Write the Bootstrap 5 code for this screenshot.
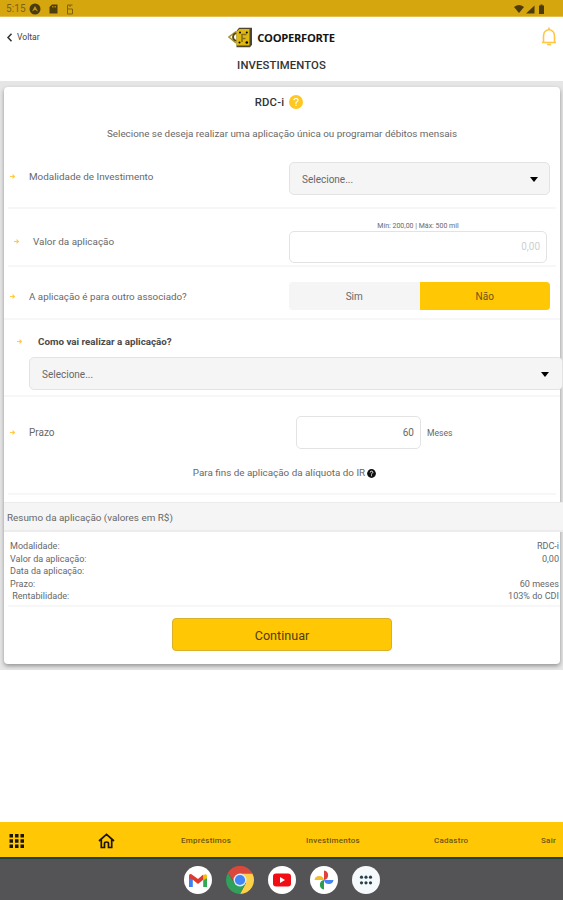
<!DOCTYPE html>
<html lang="pt-BR">
<head>
<meta charset="utf-8">
<meta name="viewport" content="width=device-width, initial-scale=1">
<title>Cooperforte - Investimentos</title>
<link href="https://cdn.jsdelivr.net/npm/bootstrap@5.3.0/dist/css/bootstrap.min.css" rel="stylesheet">
<style>
body{font-family:Roboto,"Liberation Sans",sans-serif;font-size:10px;line-height:12px;color:#686868;background:#fff;height:900px;overflow:hidden}
svg{display:block;flex:none}
.statusbar{height:17px;background:#d6a60f;color:#7a621a;padding:2px 17px 0 6px;border-bottom:1px solid #e3bd52}
.clock{font-size:10px;letter-spacing:.1px;margin-right:3px}
.apphead{height:64px;display:grid;grid-template-columns:1fr auto 1fr;padding:10px 6px 0 6px;align-items:start}
.back{font-size:8.6px;color:#444;padding-top:4px;gap:4px}
.brand{color:#151515;font:700 11.2px/20px "Open Sans",Roboto,sans-serif;letter-spacing:-.3px;gap:4px}
.pagetitle{grid-column:1/4;text-align:center;font-size:11.3px;line-height:14px;color:#333;font-weight:500;letter-spacing:.12px;padding-top:3px}
.backdrop{background:#e6e6e6;height:589px;padding:6px 3px 0 4px}
.sheet{background:#fff;height:577px;border-radius:4px;box-shadow:0 2px 4px rgba(0,0,0,.36);width:556px}
.intro{height:62px;padding-top:7px}
.rdc{font-size:11.3px;line-height:14px;color:#333;font-weight:500;gap:5px;padding-right:6px;letter-spacing:.2px}
.rdc span{padding-top:2px}
.rdc svg{margin-top:-1px}
.intro p{margin:18px 0 0;font-size:9.85px}
.line{border-bottom:2px solid #f7f7f7;margin:0 4px;padding-right:6px}
.line.wide{margin:0}
.lab{display:flex;align-items:center}
.lab svg{width:5px;height:5px;margin-top:-1px}
.row-a{height:60px;padding-top:13px}
.row-b{height:58px;padding-top:12px}
.row-c{height:53px;padding:15px 10px 0 0}
.row-d{height:77px;padding-top:16px}
.row-e{height:98px;padding-top:19px}
.field{border:1px solid #e3e3e3;border-radius:5px;background:#fff}
.picker{background:#f5f5f5;height:33px;padding:2px 11px 0 12px;display:flex;align-items:center;justify-content:space-between}
.row-a .lab,.row-e .lab{margin-left:2px;gap:14px}
.row-a .lab{margin-top:9px;font-size:9.9px}
.row-b .lab{margin:15px 0 0 6px;gap:14px;font-size:9.9px}
.row-c .lab{margin:9px 0 0 6px;gap:14px;font-size:9.8px}
.w-pick{width:261px}
.amount-box{margin-right:3px}
.amount{width:258px;height:32px;text-align:right;line-height:30px;padding-right:6px;color:#cfcfcf}
.hint{font-size:7px;line-height:9px;padding-top:1px}
.seg{width:261px;height:28px;border-radius:4px;overflow:hidden;line-height:30px;text-align:center;background:#f5f5f5}
.seg .on{background:#ffc704;color:#6b5614}
.lab.strong-lab{font-weight:700;color:#4a4a4a;gap:16px;margin-left:13px;font-size:9.8px}
.picker.full{width:534px;margin:9px 0 0 25px;position:relative;padding-right:13px}
.months{width:125px;height:33px;line-height:32px;text-align:right;padding-right:6px;margin-left:241px;flex:none}
.row-e .lab{width:45px;flex:none}
.monthslab{font-size:8.6px;margin-left:6px;padding-top:1px}
.note{font-size:9.85px;margin-top:18px;gap:2px;padding-left:5px;margin-right:-6px}
.sumhead{margin-top:7px;height:30px;width:559px;background:#f5f5f5;border-top:1px solid #ececec;border-bottom:2px solid #ececec;line-height:30px;padding-left:3px;font-size:9.9px}
.sumlist{height:75px;margin:0 0 0 4px;border-bottom:2px solid #f7f7f7;padding:8px 1px 0 2px;font-size:9.05px;line-height:12.6px}
.go.btn{width:220px;height:33px;background:#ffc704;border:1px solid #d9b02c;border-radius:4px;color:#4d3f10;font-size:12.6px;line-height:34px;margin-top:11px;padding:0}
.blank{height:152px}
.tabs{height:37px;background:#ffc704;border-bottom:2px solid #22443a;font-size:8px;letter-spacing:.25px;color:#6e5510;font-weight:500;display:grid;grid-template-columns:98px 83px 125px 128px 107px 1fr;align-items:center}
.tabs span{padding-top:3px}
.tabs svg{margin-top:2px}
.dock{height:41px;background:#545456;gap:14px}
</style>
<script src="https://cdn.jsdelivr.net/npm/bootstrap@5.3.0/dist/js/bootstrap.bundle.min.js"></script>
</head>
<body>
<svg class="d-none"><defs>
<symbol id="arrow" viewBox="0 0 5 5"><path d="M0 2.5H4.5M2.5.6 4.5 2.5 2.5 4.4" fill="none" stroke="#ffc94a" stroke-width="1.1"/></symbol>
</defs></svg>
<div class="statusbar d-flex align-items-center">
  <span class="clock">5:15</span>
  <svg width="12" height="12" viewBox="0 0 12 12"><circle cx="6" cy="6" r="5.5" fill="#4a3b10"/><path d="M3 8.500 6 3l3 5.500-3-1.800z" fill="#c2970f"/></svg>
  <svg class="ms-2" width="9" height="10" viewBox="0 0 9 10"><path d="M3 .5h5.500v9H.5V3z" fill="#4f3e0d"/><path d="M3.500 2v1.500M5 2v1.500M6.500 2v1.500" stroke="#d6a60f" stroke-width=".7"/></svg>
  <svg class="ms-2" width="8" height="11" viewBox="0 0 8 11"><path d="M6.500 1H1.500v4h5v5h-5V5M4 1v2" fill="none" stroke="#806310"/></svg>
  <svg class="ms-auto" width="32" height="11" viewBox="0 0 32 11"><path d="M0 3Q5 -1 10 3L5 9z" fill="#4d3c0b"/><path d="M12 9.500 20.500 1.500v8z" fill="#4d3c0b"/><path d="M25 1.500h1.500V.5h2v1H30v8.500h-5z" fill="#4d3c0b"/></svg>
</div>
<header class="apphead">
  <div class="back d-flex align-items-center"><svg width="7" height="9" viewBox="0 0 7 9"><path d="M5.500 .7 2 4.500 5.500 8.300" fill="none" stroke="#333" stroke-width="1.500"/></svg>Voltar</div>
  <div class="brand d-flex align-items-center">
    <svg width="25" height="21" viewBox="0 0 25 21"><path d="M8 4.500 1 10l7 6" fill="none" stroke="#a99438" stroke-width="1.500"/><path d="M8.500 6Q5 7 5 10t3.500 4" fill="none" stroke="#55490f" stroke-width="1.800"/><path d="M8.500 4 11 .8h13v17L22 20.300H8.500z" fill="#4b452f"/><path d="M8.500 4.500 11.500 2h10v16.500h-13z" fill="#e0b910"/><path d="M14 15V7.500h4.500M14 11.500h3.500" fill="none" stroke="#88701a" stroke-width="1.600"/><circle cx="12" cy="5.500" r="1"/><circle cx="18.800" cy="5.500" r="1"/><circle cx="18.800" cy="15.500" r="1.300"/><circle cx="11.500" cy="15.500" r="1"/></svg>
    <span>COOPERFORTE</span></div>
  <svg class="ms-auto" width="16" height="20" viewBox="0 0 16 20"><path d="M1 15.500h14M2.500 15.500V9Q2.500 3.500 8 2.500 13.500 3.500 13.500 9v6.500M8 .5v2M6 17.500h4" fill="none" stroke="#ffc545" stroke-width="1.600"/></svg>
  <div class="pagetitle">INVESTIMENTOS</div>
</header>
<main class="backdrop">
  <div class="sheet">
    <div class="intro text-center">
      <div class="rdc d-flex justify-content-center align-items-center"><span>RDC-i</span><svg width="14" height="14" viewBox="0 0 14 14"><circle cx="7" cy="7" r="7" fill="#ffc820"/><path d="M5 5.300Q5 3.500 7 3.500t2 1.800Q9 6.500 7 7.500V8.800M7 9.800v1.200" fill="none" stroke="#fff" stroke-width="1.200"/></svg></div>
      <p>Selecione se deseja realizar uma aplicação única ou programar débitos mensais</p>
    </div>
    <div class="line row-a d-flex justify-content-between align-items-start">
      <div class="lab"><svg><use href="#arrow"/></svg><span>Modalidade de Investimento</span></div>
      <div class="field picker w-pick"><span>Selecione...</span><svg width="8" height="5" viewBox="0 0 8 5"><path d="M0 0h8L4 5z"/></svg></div>
    </div>
    <div class="line row-b d-flex justify-content-between align-items-start">
      <div class="lab"><svg><use href="#arrow"/></svg><span>Valor da aplicação</span></div>
      <div class="amount-box"><div class="hint text-center">Mín: 200,00 | Máx: 500 mil</div><div class="field amount">0,00</div></div>
    </div>
    <div class="line wide row-c d-flex justify-content-between align-items-start">
      <div class="lab"><svg><use href="#arrow"/></svg><span>A aplicação é para outro associado?</span></div>
      <div class="seg d-flex"><div class="w-50">Sim</div><div class="w-50 on">Não</div></div>
    </div>
    <div class="line wide row-d">
      <div class="lab strong-lab"><svg><use href="#arrow"/></svg><span>Como vai realizar a aplicação?</span></div>
      <div class="field picker full"><span>Selecione...</span><svg width="8" height="5" viewBox="0 0 8 5"><path d="M0 0h8L4 5z"/></svg></div>
    </div>
    <div class="line row-e">
      <div class="d-flex align-items-center">
        <div class="lab"><svg><use href="#arrow"/></svg><span>Prazo</span></div>
        <div class="field months">60</div><div class="monthslab">Meses</div>
      </div>
      <div class="note d-flex justify-content-center align-items-center"><span>Para fins de aplicação da alíquota do IR</span><svg width="9" height="9" viewBox="0 0 9 9"><circle cx="4.500" cy="4.500" r="4.400" fill="#111"/><path d="M3.200 3.500Q3.200 2.200 4.500 2.200t1.300 1.300q0 .6-1.300 1.300v.8M4.500 6.300v.9" fill="none" stroke="#fff" stroke-width=".9"/></svg></div>
    </div>
    <div class="sumhead">Resumo da aplicação (valores em R$)</div>
    <div class="sumlist">
      <div class="d-flex justify-content-between"><span>Modalidade:</span><span>RDC-i</span></div>
      <div class="d-flex justify-content-between"><span>Valor da aplicação:</span><span>0,00</span></div>
      <div>Data da aplicação:</div>
      <div class="d-flex justify-content-between"><span>Prazo:</span><span>60 meses</span></div>
      <div class="d-flex justify-content-between"><span>&nbsp;Rentabilidade:</span><span>103% do CDI</span></div>
    </div>
    <button class="btn go d-block mx-auto" type="button">Continuar</button>
  </div>
</main>
<div class="blank"></div>
<nav class="tabs">
  <svg class="ms-2" width="17" height="16" viewBox="0 0 17 16"><path d="M1.500 1h3.500v3.500H1.500zM7 1h3.500v3.500H7zM12.500 1H16v3.500h-3.500zM1.500 6.300h3.500v3.500H1.500zM7 6.300h3.500v3.500H7zM12.500 6.300H16v3.500h-3.500zM1.500 11.600h3.500v3.500H1.500zM7 11.600h3.500v3.500H7zM12.500 11.600H16v3.500h-3.500z" fill="#1b1503"/></svg>
  <svg width="17" height="17" viewBox="0 0 17 17"><path d="M1 9 8.500 2.300 16 9M3.300 7.500v8h3.200v-4q0-1.500 2-1.500t2 1.500v4h3.200v-8" fill="none" stroke="#1b1503" stroke-width="1.700"/></svg>
  <span>Empréstimos</span><span>Investimentos</span><span>Cadastro</span><span>Sair</span>
</nav>
<footer class="dock d-flex justify-content-center align-items-center">
  <svg width="28" height="28" viewBox="0 0 28 28"><circle cx="14" cy="14" r="14" fill="#fff"/><path d="M5 10v11h3.800v-8z" fill="#3b82f0"/><path d="M23 10v11h-3.800v-8z" fill="#34a853"/><path d="M19.200 9.500 21 8.300q2-.6 2 1.700v2l-3.800 2.600z" fill="#fbbc04"/><path d="M5 10q0-2.600 2.500-1.700L14 13l5.200-4.400v5.200L14 18l-5.200-4.200L5 12z" fill="#e0392d"/></svg>
  <svg width="28" height="28" viewBox="0 0 28 28"><path d="M14 14 1.900 7A14 14 0 0 1 26.100 7z" fill="#d9483b"/><path d="M14 7.500H26.400A14 14 0 0 1 14 28L20 17z" fill="#fcd04b"/><path d="M1.900 7A14 14 0 0 1 26.400 7.500H14L8.500 16z" fill="#d9483b"/><path d="M1.900 7 8.500 17.500 19.500 17.500 14 28A14 14 0 0 1 1.900 7z" fill="#2fa15a"/><circle cx="14" cy="14" r="6.500" fill="#dfe9f8"/><circle cx="14" cy="14" r="5.100" fill="#4285f4"/></svg>
  <svg width="28" height="28" viewBox="0 0 28 28"><circle cx="14" cy="14" r="14" fill="#fff"/><rect x="5" y="7.500" width="18" height="13" rx="3" fill="#f20d14"/><path d="M12 11v6l5-3z" fill="#fff"/></svg>
  <svg width="28" height="28" viewBox="0 0 28 28"><circle cx="14" cy="14" r="14" fill="#fff"/><path d="M14 4.500a4.800 4.800 0 0 1 0 9.500z" fill="#e0413a"/><path d="M23.500 14a4.800 4.800 0 0 1-9.500 0z" fill="#4285f4"/><path d="M14 23.500A4.800 4.800 0 0 1 14 14z" fill="#2c9c4d"/><path d="M4.500 14a4.800 4.800 0 0 1 9.500 0z" fill="#f5bd2a"/></svg>
  <svg width="28" height="28" viewBox="0 0 28 28"><circle cx="14" cy="14" r="14" fill="#f6f9fc"/><g fill="#28404f"><circle cx="9.500" cy="11.200" r="1.600"/><circle cx="14" cy="11.200" r="1.600"/><circle cx="18.500" cy="11.200" r="1.600"/><circle cx="9.500" cy="16.800" r="1.600"/><circle cx="14" cy="16.800" r="1.600"/><circle cx="18.500" cy="16.800" r="1.600"/></g></svg>
</footer>
</body>
</html>
